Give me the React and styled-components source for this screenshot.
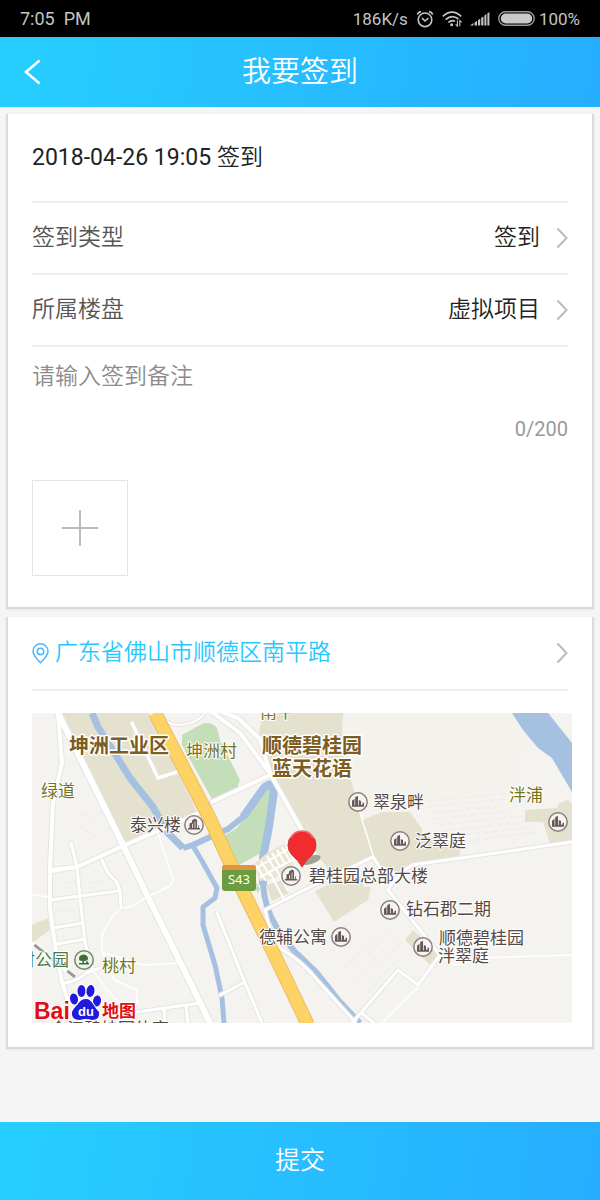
import { useState } from "react";
import styled, { createGlobalStyle } from "styled-components";

const GlobalStyle = createGlobalStyle`
    * {
        box-sizing: border-box;
    }
    body {
        margin: 0;
        background: #f5f5f5;
        font-family: Roboto, "Noto Sans CJK SC", sans-serif;
        font-weight: 350;
    }
    button,
    select,
    textarea {
        font: inherit;
        color: inherit;
        margin: 0;
        padding: 0;
        border: none;
        background: none;
    }
`;

const Page = styled.div`
    min-height: 100vh;
    display: flex;
    flex-direction: column;
`;
const StatusBar = styled.div`
    height: 37px;
    padding: 0 20px;
    display: flex;
    align-items: center;
    justify-content: space-between;
    background: #000;
    color: #c4c4c4;
    font-size: 18px;
    font-weight: 400;
`;
const StatusGroup = styled.div`
    display: flex;
    align-items: center;
    gap: 8px;
    font-size: 17px;
`;
const Battery = styled.div`
    display: flex;
    align-items: center;
    gap: 4px;
`;
const Header = styled.header`
    height: 70px;
    padding: 0 24px;
    display: grid;
    grid-template-columns: 32px 1fr 32px;
    align-items: center;
    background: linear-gradient(100deg, #26cfff, #26adff);
    color: #fff;
`;
const BackButton = styled.button`
    display: flex;
    cursor: pointer;
`;
const Title = styled.h1`
    margin: 0;
    font-size: 29px;
    line-height: 40px;
    font-weight: inherit;
    text-align: center;
`;
const Main = styled.main`
    display: flex;
    flex-direction: column;
    gap: 8px;
    padding: 7px 6px 32px;
`;
const Card = styled.section`
    padding: 0 24px;
    background: #fff;
    border: solid #dadada;
    border-width: 0 2px 2px;
    box-shadow: 0 1px 3px rgba(0, 0, 0, 0.06);
`;
const Row = styled.div`
    height: ${(props) => (props.$tall ? 89 : 72)}px;
    display: flex;
    align-items: center;
    gap: ${(props) => (props.$tall ? 6 : 16)}px;
    border-bottom: 2px solid #eee;
    font-size: 23px;
    line-height: 32px;
    color: #222;
`;
const Time = styled.time`
    font-weight: 400;
`;
const RowLabel = styled.label`
    color: #555;
`;
const RowSelect = styled.select`
    flex: 1;
    min-width: 0;
    appearance: none;
    text-align-last: right;
    outline: none;
    cursor: pointer;
`;
const Note = styled.textarea`
    display: block;
    width: 100%;
    height: 60px;
    padding-top: 14px;
    resize: none;
    outline: none;
    font-size: 23px;
    line-height: 32px;
    color: #222;
    &::placeholder {
        color: #8c8c8c;
        opacity: 1;
    }
`;
const Counter = styled.div`
    margin-top: 10px;
    font-size: 20px;
    line-height: 24px;
    font-weight: 400;
    text-align: right;
    color: #999;
`;
const AddPhoto = styled.button`
    width: 96px;
    height: 96px;
    margin: 39px 0 31px;
    display: flex;
    align-items: center;
    justify-content: center;
    border: 1px solid #e4e4e4;
    cursor: pointer;
`;
const LocationButton = styled.button`
    width: 100%;
    height: 74px;
    display: flex;
    align-items: center;
    gap: 6px;
    border-bottom: 2px solid #eee;
    font-size: 23px;
    line-height: 32px;
    color: #26c8ff;
    text-align: left;
    cursor: pointer;
`;
const Address = styled.span`
    flex: 1;
`;
const MapView = styled.svg`
    display: block;
    width: calc(100% + 4px);
    height: auto;
    margin: 22px 0 24px;
    font-family: "Noto Sans CJK SC", sans-serif;
    font-weight: 400;
`;
const Submit = styled.button`
    height: 78px;
    margin-top: auto;
    flex-shrink: 0;
    background: linear-gradient(100deg, #26cfff, #26adff);
    color: #fff;
    font-size: 25px;
    line-height: 32px;
    cursor: pointer;
`;

const Chevron = () => (
    <svg width="12" height="22" viewBox="0 0 12 22" fill="none" stroke="#bbb" strokeWidth="2">
        <path d="M1.5 1.5 10.5 11 1.5 20.5" />
    </svg>
);

const StatusIcons = {
    Alarm: () => (
        <svg width="18" height="18" viewBox="0 0 18 18" fill="none" stroke="#c4c4c4" strokeWidth="1.6">
            <circle cx="9" cy="9.8" r="6.8" />
            <path d="M6 8.2 9 11l3.4-2.8M1.4 4.6Q2 2.2 5 1.6M16.6 4.6Q16 2.2 13 1.6" />
        </svg>
    ),
    Wifi: () => (
        <svg width="20" height="16" viewBox="0 0 20 16" fill="none" stroke="#c4c4c4" strokeWidth="1.7">
            <path d="M.8 5.4Q10-3 19.2 5.4M3.6 8.6Q10 2.8 16.4 8M6.4 11.4Q10 8.4 13 10.4" />
            <circle cx="9.6" cy="13.8" r="1.5" fill="#c4c4c4" stroke="none" />
            <path d="M15.4 9.6v5.6l-1.8-1.8M17.8 15.2V9.6l1.8 1.8" strokeWidth="1.1" />
        </svg>
    ),
    Signal: () => (
        <svg width="20" height="14" viewBox="0 0 20 14" fill="#c4c4c4">
            <path d="M0 13.5 3.4 11v2.5zM4.6 10.4l2.4-1.6v4.7H4.6zM8 8.2l2.2-1.6v6.9H8zM11.2 5.8l2.2-1.4v9.1h-2.2zM14.4 3.6 16.4 2v11.5h-2zM17.4 1.4 19.4 0v13.5h-2z" />
        </svg>
    ),
    Power: () => (
        <svg width="37" height="15" viewBox="0 0 37 15">
            <rect x=".8" y=".8" width="35.4" height="13.4" rx="6.7" fill="none" stroke="#999" strokeWidth="1.4" />
            <rect x="2.8" y="2.6" width="31.4" height="9.8" rx="4.9" fill="#cacaca" />
        </svg>
    ),
};

const roads = [
    { w: 6, d: "M26 0 91 132 115 182 161 275 178 310" },
    { w: 4, d: "M26 0 30 50 21 90 18 155 18 195 23 232 30 269 36 288" },
    { w: 4, d: "M18 157 45 154 91 133 167 100" },
    { w: 3, d: "M39 130 45 154 48 185 53 230 61 258" },
    { w: 3, d: "M70 147 76 160 84 168 88 178 89 195" },
    { w: 3, d: "M18 159 45 154M18 187 86 178M21 215 51 210M25 231 53 226" },
    { w: 3, d: "M33 270Q48 267 54 260L71 254" },
    { w: 3, d: "M105 299 168 290M132 296 133 310M154 293 156 310" },
    { w: 4, d: "M181 0 208 20 238 60" },
    { w: 4, d: "M192 0 206 5 228 26 238 60 268 114 282 140" },
    { w: 4, d: "M238 62 180 89" },
    { w: 3, d: "M100 10 126 65 145 59" },
    { w: 2, d: "M130 4Q140 16 158 10Q168 7 173 0" },
    { w: 3, d: "M540 129 380 152Q364 162 356 177L408 242 386 272 366 257 320 310" },
    { w: 3, d: "M233 197 268 179 341 144 349 156" },
    { w: 3, d: "M233 197Q238 222 248 235Q270 248 286 268L323 309M331 301 342 310" },
    { w: 3, d: "M185 200 211 265 230 310M188 282 213 269" },
];

const paths = [
    "M126 120 141 165Q141 173 134 175L115 184 100 193 89 195Q70 214 70 226V236Q76 256 82 267L105 277V292",
    "M71 240Q88 244 111 252L150 250M60 256 76 278 92 296",
    "M0 182 18 184M325 90 341 142",
    "M540 242 441 245Q430 254 420 251L408 242M386 274 350 310",
];

const places = [
    { name: "泰兴楼", x: 98, y: 118, icon: [162, 112], tower: true },
    { name: "翠泉畔", x: 341, y: 95, icon: [326, 89] },
    { name: "泛翠庭", x: 383, y: 134, icon: [368, 128] },
    { name: "碧桂园总部大楼", x: 277, y: 169, icon: [259, 163], tower: true },
    { name: "钻石郡二期", x: 374, y: 202, icon: [358, 197] },
    { name: "顺德碧桂园", x: 407, y: 231, icon: [391, 234] },
    { name: "泮翠庭", x: 406, y: 249 },
    { name: "德辅公寓", x: 227, y: 230, icon: [309, 224] },
    { name: "泮浦", x: 477, y: 88, icon: [526, 109], color: "#75751a" },
    { name: "坤洲村", x: 154, y: 44, color: "#75751a" },
    { name: "绿道", x: 9, y: 84, color: "#75751a" },
    { name: "桃村", x: 70, y: 259, color: "#75751a" },
    { name: "南平", x: 228, y: 5, color: "#75751a" },
    { name: "村公园", x: -14, y: 253, color: "#4c7a4a" },
    { name: "会江碧桂园体育", x: 18, y: 322 },
];

const districts = [
    { name: "坤洲工业区", x: 37, y: 40 },
    { name: "顺德碧桂园", x: 230, y: 40 },
    { name: "蓝天花语", x: 240, y: 63 },
];

const PlaceIcon = ({ x, y, tower }) => (
    <g transform={`translate(${x} ${y})`}>
        <circle r="9.2" fill="#f6f4f2" stroke="#8b7e7c" strokeWidth="1.5" />
        {tower ? (
            <path fill="#665856" d="M-6 4.500V3h1.500V-1.500L-2-2.500V-4.500L1-6.500 3-5V3H4.200V0L5 .5V3H6V4.500zM-2-1V3H-1.200V-1.500zM.6-3.500V3H1.400V-3.500z" />
        ) : (
            <path fill="#665856" d="M-6 4.800v-6l2.500-2v6.500h.7v-8.300l2.800-1v9.300h.8V-2l2.200 1v3.700h1.500V.8h1.500v4z" />
        )}
    </g>
);

const BaiduMap = () => (
    <MapView viewBox="0 0 540 310" role="img" aria-label="地图">
        <rect width="540" height="310" fill="#f4f3ef" />

        <g fill="#e4e1ce">
            <path d="M30 0H117L165 99 94 131z" />
            <path d="M231 0H311L310 37 331 107 350 99H378L390 116V121L428 137V143L380 151 366 159 344 150 341 144 300 160 279 135 238 55 226 24z" />
            <path d="M283 178 325 158 332 174H339L336 187 302 209z" />
            <path d="M493 97 526 95V91L536 87 540 91V128L518 131 511 109H493z" />
            <path d="M381 217 373 227 401 255 408 242z" />
            <path d="M0 212 16 205 18 217 0 230z" />
            <path d="M234 172 250 167 257 180 240 188z" />
        </g>
        <g fill="#c4deba">
            <path d="M150 22 170 11Q179 8 185 15L188 27 208 67 205 75 180 86 150 32z" />
            <path d="M236 72 241 77 229 140 205 153 190 124 205 115 225 87z" />
            <path d="M220 162 228 176 226 180 218 166z" />
        </g>
        <path d="M311 0H480L494 24 488 70 425 90 385 98 350 90 325 85 310 37z" fill="#f3f2ec" />

        {/* fields and building footprints */}
        <g stroke="#ecebe7" strokeWidth="1" strokeDasharray="6 3" fill="none">
            <path d="M395 88 480 80M395 94 475 86M398 100 472 93M402 106 478 98M406 112 490 103M410 118 494 109M416 124 500 114M424 130 504 119" />
            <path d="M312 256 350 212M318 262 358 216M324 268 364 222M330 274 370 228M336 280 374 236" />
            <path d="M50 100 78 116M46 112 74 130M60 92 84 112M30 170 44 168M28 198 48 196M58 170 80 166" />
        </g>

        <g fill="none" stroke="#a6c0e1" strokeLinejoin="round">
            <path d="M60 0 66 14 85 44 98 65 121 94 136 120 151 135" strokeWidth="7" />
            <path d="M151 135 161 132 178 124 196 116 211 104 231 76Q239 66 241 78L237 114 231 144V170Q232 194 245 215L262 238 285 260 308 289 328 310" strokeWidth="6" />
            <path d="M211 104 231 76Q240 66 242 78L237 114 231 144V172" strokeWidth="8" />
            <path d="M161 133 170 148 185 175 183 185 171 194V212L183 252 190 285 192 310" strokeWidth="5" />
        </g>
        <path d="M480 0H516L540 30V79L520 45 506 35 491 17z" fill="#a6c0e1" />

        <g fill="none" stroke="#e6e5e2" strokeLinejoin="round" strokeLinecap="round">
            {roads.map((road) => (
                <path key={road.d} d={road.d} strokeWidth={road.w + 2} />
            ))}
        </g>
        <g fill="none" stroke="#fff" strokeLinejoin="round" strokeLinecap="round">
            {roads.map((road) => (
                <path key={road.d} d={road.d} strokeWidth={road.w} />
            ))}
            {paths.map((d) => (
                <path key={d} d={d} strokeWidth="1.5" />
            ))}
        </g>

        {/* estate blocks around the pin */}
        <path d="M222 151 235 140 252 131 262 152 244 165 228 168z" fill="#e9e6d6" />
        <path
            d="M224 152 234 168M229 148 238 163M235 143 243 157M240 140 248 154M245 137 253 151M250 134 258 148M223 156 256 136M228 164 262 146M238 160 252 186M244 156 256 178"
            fill="none"
            stroke="#fff"
            strokeWidth="2"
        />

        <path d="M0 230 43 264" stroke="#fff" strokeWidth="4" />
        <path d="M0 230 43 264" stroke="#999" strokeWidth="3" strokeDasharray="12 9" strokeDashoffset="-3" />

        <path d="M123 0 178 106 211 178 241 239 276 312" fill="none" stroke="#efb95d" strokeWidth="14" />
        <path d="M123 0 178 106 211 178 241 239 276 312" fill="none" stroke="#fed366" strokeWidth="12" />

        <rect x="190" y="152" width="34" height="26" rx="3" fill="#6b9d40" />
        <path d="M190 157v-2q0-3 3-3h28q3 0 3 3v2z" fill="#e39443" />
        <text x="207" y="171" fontSize="13" fill="#fff" textAnchor="middle" fontFamily="Noto Sans">
            S43
        </text>

        {places.map(
            (place) =>
                place.icon && (
                    <PlaceIcon key={place.name} x={place.icon[0]} y={place.icon[1]} tower={place.tower} />
                )
        )}
        <g transform="translate(52 247)">
            <circle r="9.2" fill="#f0f4ec" stroke="#6c8a68" strokeWidth="1.5" />
            <path fill="#3f6b3d" d="M-5 4.500h10v-1.500H4V1.500H2V3H0V1Q4 1 4-1.500Q4-5-.5-5.500Q-5-5-5-1.500Q-5 1-1.500 1V3H-5z" />
        </g>

        <g fontSize="17" stroke="#fff" strokeWidth="2" strokeLinejoin="round" paintOrder="stroke">
            {places.map((place) => (
                <text key={place.name + place.x} x={place.x} y={place.y} fill={place.color || "#554946"}>
                    {place.name}
                </text>
            ))}
        </g>
        <g fontSize="20" fontWeight="700" fill="#7d5d1f" stroke="#fff" strokeWidth="3" strokeLinejoin="round" paintOrder="stroke">
            {districts.map((district) => (
                <text key={district.name} x={district.x} y={district.y}>
                    {district.name}
                </text>
            ))}
        </g>

        <ellipse cx="279" cy="147" rx="10" ry="4" fill="#6b6b5c" opacity=".6" transform="rotate(-18 279 147)" />
        <path
            d="M270 154Q266 147 260 142A14 14 0 1 1 280 142Q274 147 270 154z"
            fill="#f02c2f"
            stroke="#c9383a"
            strokeWidth="1"
        />
        <path d="M259 125Q262 118 270 118T281 125" fill="none" stroke="#f7696a" strokeWidth="1.500" />

        <g stroke="#fff" strokeWidth="2" paintOrder="stroke" fontWeight="700" fill="#e10f15">
            <text x="2" y="306" fontSize="23" fontFamily="Liberation Sans">
                Bai
            </text>
            <text x="70" y="304" fontSize="17">
                地图
            </text>
            <g fill="#2319dc">
                <ellipse cx="42" cy="286" rx="4" ry="5.500" transform="rotate(-12 42 286)" />
                <ellipse cx="49.500" cy="278" rx="4" ry="6" />
                <ellipse cx="58.500" cy="278" rx="4" ry="6" transform="rotate(8 58.500 278)" />
                <ellipse cx="65" cy="288" rx="4" ry="5.500" transform="rotate(12 65 288)" />
                <path d="M54 286Q58 286 61 291T67 299Q68 307 60 307Q54 305 48 307Q39 307 40 299Q41 296 46 291Q49 286 54 286z" />
            </g>
        </g>
        <text x="54" y="303" fontSize="13" fontWeight="700" fontFamily="Liberation Sans" fill="#fff" textAnchor="middle">
            du
        </text>
    </MapView>
);

const App = () => {
    const [note, setNote] = useState("");

    return (
        <Page>
            <GlobalStyle />
            <StatusBar>
                <span>7:05&nbsp; PM</span>
                <StatusGroup>
                    <span>186K/s</span>
                    <StatusIcons.Alarm />
                    <StatusIcons.Wifi />
                    <StatusIcons.Signal />
                    <Battery>
                        <StatusIcons.Power />
                        <span>100%</span>
                    </Battery>
                </StatusGroup>
            </StatusBar>
            <Header>
                <BackButton type="button" aria-label="返回">
                    <svg width="17" height="26" viewBox="0 0 17 26" fill="none" stroke="#fff" strokeWidth="2.500">
                        <path d="M15.500 1.500 2 13l13.500 11.500" />
                    </svg>
                </BackButton>
                <Title>我要签到</Title>
            </Header>
            <Main>
                <Card>
                    <Row $tall>
                        <Time dateTime="2018-04-26T19:05">2018-04-26 19:05</Time>
                        <span>签到</span>
                    </Row>
                    <Row>
                        <RowLabel htmlFor="type">签到类型</RowLabel>
                        <RowSelect id="type">
                            <option>签到</option>
                        </RowSelect>
                        <Chevron />
                    </Row>
                    <Row>
                        <RowLabel htmlFor="project">所属楼盘</RowLabel>
                        <RowSelect id="project">
                            <option>虚拟项目</option>
                        </RowSelect>
                        <Chevron />
                    </Row>
                    <Note
                        aria-label="签到备注"
                        placeholder="请输入签到备注"
                        maxLength={200}
                        value={note}
                        onChange={(e) => setNote(e.target.value)}
                    />
                    <Counter>{note.length}/200</Counter>
                    <AddPhoto type="button" aria-label="添加照片">
                        <svg width="36" height="36" viewBox="0 0 36 36" stroke="#bbb" strokeWidth="2">
                            <path d="M18 0v36M0 18h36" />
                        </svg>
                    </AddPhoto>
                </Card>
                <Card>
                    <LocationButton type="button">
                        <svg width="17" height="21" viewBox="0 0 17 21" fill="none" stroke="#4db8fa" strokeWidth="1.500">
                            <path d="M8.500 19.800Q1 12.500 1 8.300a7.500 7.500 0 0 1 15 0Q16 12.500 8.500 19.800z" />
                            <circle cx="8.500" cy="8.500" r="3.200" />
                        </svg>
                        <Address>广东省佛山市顺德区南平路</Address>
                        <Chevron />
                    </LocationButton>
                    <BaiduMap />
                </Card>
            </Main>
            <Submit type="button">提交</Submit>
        </Page>
    );
};

export default App;
